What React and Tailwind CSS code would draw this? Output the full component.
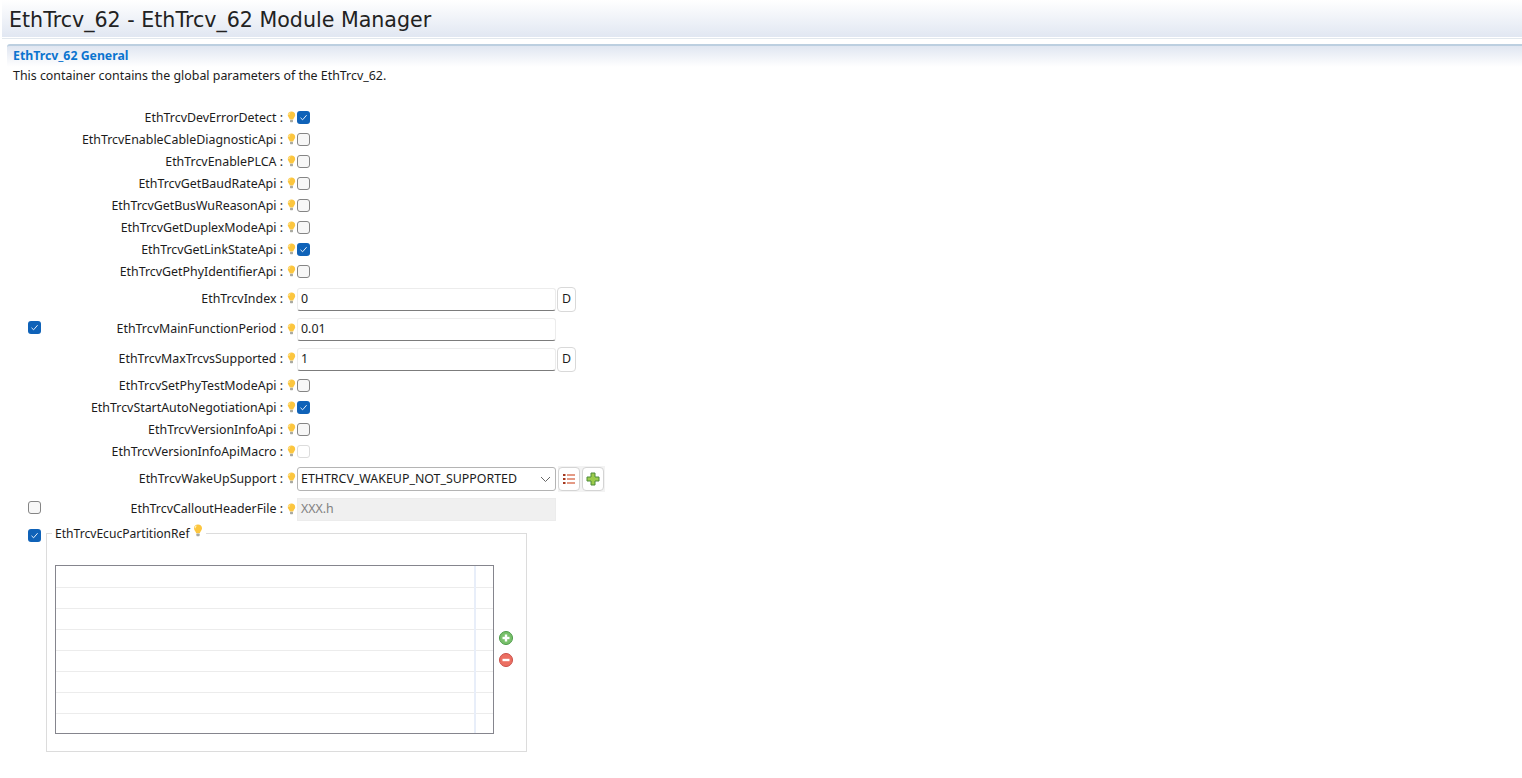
import React from 'react';

const font = { fontFamily: '"Noto Sans", "Noto Sans CJK SC", sans-serif' };

const Bulb = ({ className = '' }) => (
  <svg width="9" height="12" viewBox="0 0 9 12" className={className}>
    <path d="M4.5 0.5C2.3 0.5 0.8 2 0.8 3.9c0 1.5 1 2.3 1.6 3.5.2.4.3.8.3 1.1h3.6c0-.3.1-.7.3-1.1.6-1.2 1.6-2 1.6-3.5C8.2 2 6.7.5 4.5.5z" fill="#fcc63f" />
    <path d="M3 1.6C2.2 2.1 1.8 3 1.9 3.9" stroke="#fff3c0" strokeWidth="1" fill="none" />
    <rect x="3" y="8.8" width="3" height="2.4" rx="0.6" fill="#a9a9a0" />
  </svg>
);

const Check = ({ state, className = '' }) => {
  if (state === 'on') {
    return (
      <span className={`flex h-[13px] w-[13px] shrink-0 items-center justify-center rounded-[3px] bg-[#0f62b8] ${className}`}>
        <svg width="9" height="9" viewBox="0 0 9 9">
          <path d="M1.5 4.8 3.6 6.8 7.6 2.2" stroke="#e6f0fb" strokeWidth="1" fill="none" />
        </svg>
      </span>
    );
  }
  if (state === 'disabled') {
    return <span className={`h-[13px] w-[13px] shrink-0 rounded-[3px] border border-[#dcdcdc] bg-white ${className}`} />;
  }
  return <span className={`h-[13px] w-[13px] shrink-0 rounded-[3px] border border-[#858585] bg-[#f7f7f7] ${className}`} />;
};

// label : bulb control, with the optional checkbox in the far left column
const Row = ({ label, height, top = 0, optional, children }) => (
  <div className="flex items-center" style={{ height, marginTop: top }}>
    <div className="flex w-[59px] justify-end pr-[18px]">
      {optional && <Check state={optional} className="-mt-[4px]" />}
    </div>
    <div className="w-[224px] whitespace-nowrap text-right">{label} :</div>
    <div className="flex w-[14px] justify-end pr-[1px]">
      <Bulb className="-mt-[2px]" />
    </div>
    {children}
  </div>
);

const Field = ({ value }) => (
  <div className="flex h-[23px] w-[259px] items-center rounded-[3px] border border-[#ececec] border-b-[#7c7c7c] bg-white pl-[3px]">
    {value}
  </div>
);

const DButton = () => (
  <div className="ml-[1px] flex h-[25px] w-[19px] items-center justify-center rounded-[4px] border border-[#d9d9d9] bg-white">
    D
  </div>
);

const ToolButton = ({ children }) => (
  <div className="flex h-[24px] w-[22px] items-center justify-center rounded-[4px] border border-[#d4d4d4] bg-white">
    {children}
  </div>
);

const RoundIcon = ({ color, edge, plus }) => (
  <svg width="14" height="14" viewBox="0 0 14 14">
    <circle cx="7" cy="7" r="6.5" fill={color} stroke={edge} />
    <rect x="3.5" y="5.8" width="7" height="2.4" fill="#fff" />
    {plus && <rect x="5.8" y="3.5" width="2.4" height="7" fill="#fff" />}
  </svg>
);

const checkRows1 = [
  ['EthTrcvDevErrorDetect', 'on'],
  ['EthTrcvEnableCableDiagnosticApi', 'off'],
  ['EthTrcvEnablePLCA', 'off'],
  ['EthTrcvGetBaudRateApi', 'off'],
  ['EthTrcvGetBusWuReasonApi', 'off'],
  ['EthTrcvGetDuplexModeApi', 'off'],
  ['EthTrcvGetLinkStateApi', 'on'],
  ['EthTrcvGetPhyIdentifierApi', 'off'],
];

const checkRows2 = [
  ['EthTrcvSetPhyTestModeApi', 'off'],
  ['EthTrcvStartAutoNegotiationApi', 'on'],
  ['EthTrcvVersionInfoApi', 'off'],
  ['EthTrcvVersionInfoApiMacro', 'disabled'],
];

export default function App() {
  return (
    <div className="h-[778px] overflow-hidden bg-white text-[12.4px] leading-none text-[#1c1c1c]" style={font}>
      {/* page title */}
      <div className="ml-[2px] h-[37px] bg-gradient-to-b from-white to-[#e1e7f2] pl-[7px] pt-[8px]">
        <h1 className="text-[20.6px] font-normal leading-[24px] text-[#222]" style={{ fontFamily: '"DejaVu Sans", sans-serif' }}>
          EthTrcv_62 - EthTrcv_62 Module Manager
        </h1>
      </div>
      <div className="mt-[1px] ml-[2px] h-[1px] bg-[#e2e8ee]" />

      {/* section header */}
      <div className="mt-[5px] ml-[7px] h-[23px] rounded-tl-[3px] border-t-2 border-[#bccfe0] bg-gradient-to-b from-[#e0e6f1] to-white pl-[6px] pt-[3px]">
        <span className="text-[12.3px] font-bold leading-[14px] text-[#0b74cf]">EthTrcv_62 General</span>
      </div>
      <p className="mt-[1px] pl-[13px] leading-[16px]">This container contains the global parameters of the EthTrcv_62.</p>

      <div className="mt-[23px]">
        {checkRows1.map(([label, state]) => (
          <Row key={label} label={label} height={22}>
            <Check state={state} className="-mt-[2px]" />
          </Row>
        ))}

        <Row label="EthTrcvIndex" height={30} top={1}>
          <Field value="0" />
          <DButton />
        </Row>
        <Row label="EthTrcvMainFunctionPeriod" height={29} top={1} optional="on">
          <Field value="0.01" />
        </Row>
        <Row label="EthTrcvMaxTrcvsSupported" height={30}>
          <Field value="1" />
          <DButton />
        </Row>

        <div className="mt-[1px]">
          {checkRows2.map(([label, state]) => (
            <Row key={label} label={label} height={22}>
              <Check state={state} className="-mt-[2px]" />
            </Row>
          ))}
        </div>

        <Row label="EthTrcvWakeUpSupport" height={24} top={4}>
          <div className="flex h-[24px] w-[259px] items-center justify-between rounded-[3px] border border-[#b4b4b4] bg-white pl-[3px] pr-[4px]">
            <span>ETHTRCV_WAKEUP_NOT_SUPPORTED</span>
            <svg width="11" height="7" viewBox="0 0 11 7">
              <path d="M1 1 5.5 5.5 10 1" stroke="#666" fill="none" />
            </svg>
          </div>
          <div className="ml-[2px] flex h-[26px] items-center gap-[2px] bg-[#f3f3f3] pr-[1px]">
            <ToolButton>
              <svg width="12" height="10" viewBox="0 0 12 10">
                <path d="M0 1h2.5M0 5h2.5M0 9h2.5" stroke="#a5391f" strokeWidth="2" />
                <path d="M4 1h8M4 5h8M4 9h8" stroke="#dc7a5e" strokeWidth="1.4" />
              </svg>
            </ToolButton>
            <ToolButton>
              <svg width="14" height="14" viewBox="0 0 14 14">
                <path d="M5 1h4v4h4v4H9v4H5V9H1V5h4z" fill="#9ccb4b" stroke="#4d8a3a" />
              </svg>
            </ToolButton>
          </div>
        </Row>

        <Row label="EthTrcvCalloutHeaderFile" height={23} top={7} optional="off">
          <div className="flex h-[23px] w-[259px] items-center border border-[#ececec] bg-[#f0f0f0] pl-[3px] text-[#808080]">
            XXX.h
          </div>
        </Row>

        {/* reference group */}
        <div className="mt-[4px] flex items-start">
          <div className="flex w-[46px] justify-end pr-[5px] pt-[4px]">
            <Check state="on" />
          </div>
          <fieldset className="h-[227px] w-[481px] border border-[#dcdcdc] pl-[8px]">
            <legend className="-ml-[3px] flex items-start px-[3px] text-[12.1px] leading-[16px]">
              <span className="translate-y-[1px]">EthTrcvEcucPartitionRef</span>
              <Bulb className="ml-[3px] -mt-[1px] h-[13px] w-[10px]" />
            </legend>
            <div className="mt-[24px] flex items-center">
              <div className="flex h-[169px] w-[439px] border border-[#85858d]">
                <div className="flex-1 overflow-hidden">
                  {[0, 1, 2, 3, 4, 5, 6, 7].map((i) => (
                    <div key={i} className="h-[21px] border-b border-[#ececec] first:h-[22px] last:border-b-0" />
                  ))}
                </div>
                <div className="w-[19px] overflow-hidden border-l-2 border-[#e8eef9]">
                  {[0, 1, 2, 3, 4, 5, 6, 7].map((i) => (
                    <div key={i} className="h-[21px] border-b border-[#ececec] first:h-[22px] last:border-b-0" />
                  ))}
                </div>
              </div>
              <div className="ml-[5px] -mt-[2px] flex flex-col gap-[8px]">
                <RoundIcon color="#79c06b" edge="#4c9a49" plus />
                <RoundIcon color="#ec6f62" edge="#c9504a" />
              </div>
            </div>
          </fieldset>
        </div>
      </div>
    </div>
  );
}
